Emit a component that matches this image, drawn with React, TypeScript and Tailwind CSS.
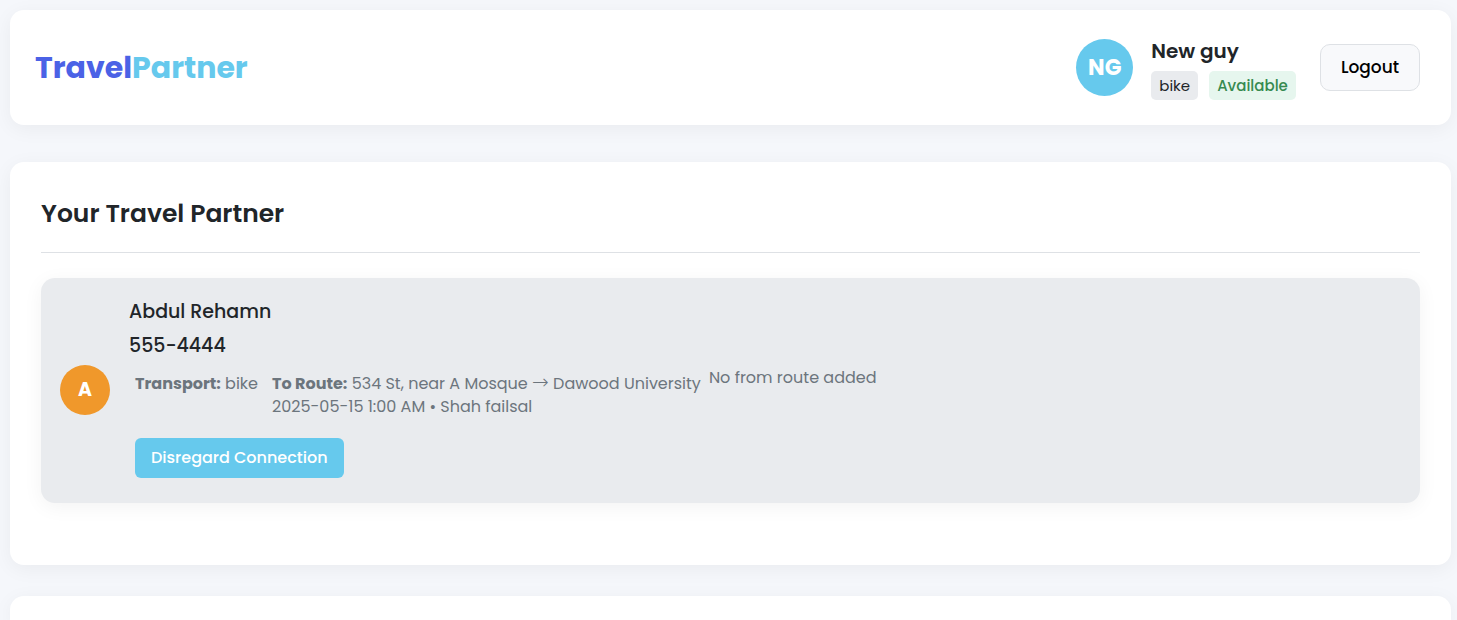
import type { ReactNode } from "react";

const cardShadow = "shadow-[0_4px_20px_rgba(0,0,0,0.05)]";

function Avatar({ initials, className }: { initials: string; className: string }) {
  return (
    <div className={`flex shrink-0 items-center justify-center rounded-full text-white ${className}`}>
      {initials}
    </div>
  );
}

function Detail({ label, children }: { label: string; children: ReactNode }) {
  return (
    <p className="py-1.5 pr-2 pl-1.5">
      <strong className="font-bold">{label}</strong> {children}
    </p>
  );
}

function Header() {
  return (
    <header className={`flex items-center justify-between rounded-[14px] bg-white py-[25px] pr-[31px] pl-[25px] ${cardShadow}`}>
      <a href="#" className="text-[30px] leading-10 font-bold text-[#4b62e6]">
        Travel<span className="text-[#66c9ed]">Partner</span>
      </a>
      <div className="flex items-center gap-6">
        <div className="flex items-center gap-[18px]">
          <Avatar initials="NG" className="size-[57px] bg-[#66c9ed] text-[22px] font-bold" />
          <div>
            <h2 className="mb-[3px] text-xl leading-[33px] font-semibold">New guy</h2>
            <div className="flex gap-[11px] text-[15px] leading-[29px]">
              <span className="rounded-[5px] bg-[#e9ebee] px-2">bike</span>
              <span className="rounded-[5px] bg-[#e6f6ee] px-2 font-medium text-[#368a50]">Available</span>
            </div>
          </div>
        </div>
        <button
          type="button"
          className="rounded-[10px] border border-[#dee1e5] bg-[#f8f9fb] px-5 py-2.5 text-[17px] leading-[25px] font-medium text-black"
        >
          Logout
        </button>
      </div>
    </header>
  );
}

function PartnerCard() {
  return (
    <article className={`flex items-center gap-[19px] rounded-[14px] bg-[#e9ebee] px-[19px] pt-[19px] pb-5 ${cardShadow}`}>
      <Avatar initials="A" className="size-[50px] bg-[#f0982b] text-[19px] font-bold" />
      <div>
        <h3 className="mb-1 text-[19px] leading-[30px] font-medium">Abdul Rehamn</h3>
        <p className="mb-[5px] text-[19px] leading-[30px] font-medium">555-4444</p>
        <div className="flex text-base leading-[23px] text-[#6c757d]">
          <Detail label="Transport:">bike</Detail>
          <Detail label="To Route:">
            534 St, near A Mosque{" "}
            <span className="font-['DejaVu_Sans',sans-serif] text-xl leading-none font-extralight">→</span> Dawood University
            <br />
            2025-05-15 1:00 AM • Shah failsal
          </Detail>
          <p>No from route added</p>
        </div>
        <div className="px-1.5 pt-3.5 pb-[5px]">
          <button
            type="button"
            className="rounded-md bg-[#66c9ed] px-4 py-2 text-base leading-6 font-medium text-white"
          >
            Disregard Connection
          </button>
        </div>
      </div>
    </article>
  );
}

export default function App() {
  return (
    <div className="flex min-h-screen flex-col bg-[#f5f7fb] pt-2.5 pr-1.5 pl-2.5 font-['Poppins','Inter',sans-serif] text-[#212529]">
      <Header />
      <main className="mt-[37px] flex flex-1 flex-col gap-[31px]">
        <section className={`rounded-[14px] bg-white px-[31px] pt-[33px] pb-[62px] ${cardShadow}`}>
          <h1 className="mb-[25px] border-b border-[#dee1e5] pb-[19px] text-[25px] leading-[38px] font-semibold">
            Your Travel Partner
          </h1>
          <PartnerCard />
        </section>
        <section className={`flex-1 rounded-t-[14px] bg-white ${cardShadow}`} />
      </main>
    </div>
  );
}
